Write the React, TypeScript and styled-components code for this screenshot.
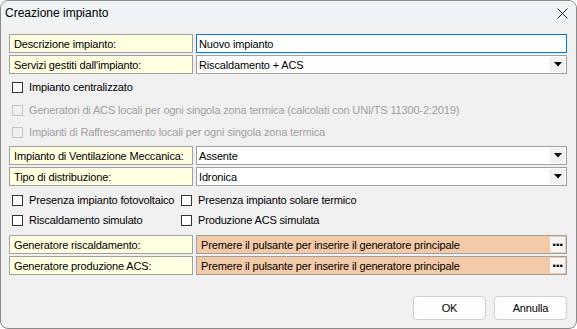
import React from "react";
import styled, { createGlobalStyle } from "styled-components";

const Global = createGlobalStyle`
  html, body { margin: 0; padding: 0; background: #ffffff; }
  body { font-family: "Liberation Sans", Arial, sans-serif; }
  * { box-sizing: border-box; }
`;

const Window = styled.div`
  width: 577px;
  height: 329px;
  border: 1px solid #8a8a8a;
  border-radius: 8px;
  background: #f0f0f0;
  overflow: hidden;
  display: flex;
  flex-direction: column;
`;

const TitleBar = styled.div`
  height: 24px;
  background: #eef3f6;
  display: flex;
  align-items: center;
  justify-content: space-between;
  padding: 0 7px 0 4px;
  font-family: "Liberation Sans", Arial, sans-serif;
  font-size: 12px;
  color: #000;
`;

const CloseButton = styled.div`
  width: 14px;
  height: 14px;
  display: flex;
  align-items: center;
  justify-content: center;
`;

const Content = styled.div`
  display: flex;
  flex-direction: column;
  padding: 9px 8px 0 8px;
  font-size: 11px;
  letter-spacing: -0.15px;
  color: #000;
`;

const FieldRow = styled.div<{ $mt?: number }>`
  display: grid;
  grid-template-columns: 184px 371px;
  column-gap: 3px;
  height: 19px;
  margin-top: ${(p) => p.$mt ?? 0}px;
`;

const Label = styled.div`
  background: #ffffe1;
  border: 1px solid #a0a0a0;
  display: flex;
  align-items: center;
  padding-left: 4px;
  white-space: nowrap;
`;

const TextInput = styled.div`
  background: #fff;
  border: 1px solid #0078d7;
  display: flex;
  align-items: center;
  padding-left: 2px;
`;

const Combo = styled.div`
  background: #fff;
  border: 1px solid #a0a0a0;
  display: flex;
  align-items: center;
  justify-content: space-between;
  padding-left: 2px;
`;

const ComboArrow = styled.div`
  width: 15px;
  height: 15px;
  margin-right: 1px;
  background: #f0f0f0;
  display: flex;
  align-items: center;
  justify-content: center;
`;

const PickerField = styled.div`
  background: #f3caa7;
  border: 1px solid #a0a0a0;
  display: flex;
  align-items: center;
  justify-content: space-between;
  padding-left: 4px;
`;

const EllipsisButton = styled.div`
  width: 15px;
  height: 15px;
  margin-right: 1px;
  background: #f5f5f5;
  display: flex;
  align-items: center;
  justify-content: center;
  font-family: "DejaVu Sans", sans-serif;
  font-weight: bold;
  font-size: 13px;
  letter-spacing: -1.4px;
  line-height: 9px;
  padding-bottom: 6px;
  padding-right: 1px;
`;

const CheckRow = styled.div<{ $mt?: number }>`
  display: flex;
  align-items: center;
  height: 20px;
  margin-top: ${(p) => p.$mt ?? 0}px;
`;

const CheckGrid = styled.div<{ $mt?: number }>`
  display: grid;
  grid-template-columns: 169px 1fr;
  margin-top: ${(p) => p.$mt ?? 0}px;
`;

const CheckItem = styled.label<{ $disabled?: boolean }>`
  display: flex;
  align-items: center;
  gap: 6px;
  height: 20px;
  padding-left: 3px;
  color: ${(p) => (p.$disabled ? "#a0a0a0" : "#000")};
  white-space: nowrap;
`;

const Box = styled.span<{ $disabled?: boolean }>`
  width: 11px;
  height: 11px;
  flex: none;
  border: 1px solid ${(p) => (p.$disabled ? "#c4c4c4" : "#333")};
  background: ${(p) => (p.$disabled ? "#f0f0f0" : "#fff")};
`;

const ButtonBar = styled.div`
  display: flex;
  justify-content: flex-end;
  gap: 8px;
  margin-top: 21px;
  padding-right: 1px;
`;

const Button = styled.div`
  width: 73px;
  height: 24px;
  background: #fdfdfd;
  border: 1px solid #d0d0d0;
  border-radius: 4px;
  display: flex;
  align-items: center;
  justify-content: center;
  font-size: 11px;
`;

const Check = ({ label, disabled }: { label: string; disabled?: boolean }) => (
  <CheckItem $disabled={disabled}>
    <Box $disabled={disabled} />
    {label}
  </CheckItem>
);

const Arrow = () => (
  <svg width="8" height="5" viewBox="0 0 8 5">
    <polygon points="0,0 8,0 4,4.5" fill="#000" />
  </svg>
);

export default function App() {
  return (
    <>
      <Global />
      <Window>
        <TitleBar>
          <span>Creazione impianto</span>
          <CloseButton>
            <svg width="11" height="11" viewBox="0 0 11 11">
              <path d="M0.5 0.5 L10.5 10.5 M10.5 0.5 L0.5 10.5" stroke="#222" strokeWidth="1" />
            </svg>
          </CloseButton>
        </TitleBar>
        <Content>
          <FieldRow>
            <Label>Descrizione impianto:</Label>
            <TextInput>Nuovo impianto</TextInput>
          </FieldRow>
          <FieldRow $mt={2}>
            <Label>Servizi gestiti dall'impianto:</Label>
            <Combo>
              Riscaldamento + ACS
              <ComboArrow>
                <Arrow />
              </ComboArrow>
            </Combo>
          </FieldRow>
          <CheckRow $mt={3}>
            <Check label="Impianto centralizzato" />
          </CheckRow>
          <CheckRow $mt={3}>
            <Check
              disabled
              label="Generatori di ACS locali per ogni singola zona termica (calcolati con UNI/TS 11300-2:2019)"
            />
          </CheckRow>
          <CheckRow $mt={2}>
            <Check
              disabled
              label="Impianti di Raffrescamento locali per ogni singola zona termica"
            />
          </CheckRow>
          <FieldRow $mt={4}>
            <Label>Impianto di Ventilazione Meccanica:</Label>
            <Combo>
              Assente
              <ComboArrow>
                <Arrow />
              </ComboArrow>
            </Combo>
          </FieldRow>
          <FieldRow $mt={2}>
            <Label>Tipo di distribuzione:</Label>
            <Combo>
              Idronica
              <ComboArrow>
                <Arrow />
              </ComboArrow>
            </Combo>
          </FieldRow>
          <CheckGrid $mt={4}>
            <Check label="Presenza impianto fotovoltaico" />
            <Check label="Presenza impianto solare termico" />
            <Check label="Riscaldamento simulato" />
            <Check label="Produzione ACS simulata" />
          </CheckGrid>
          <FieldRow $mt={5}>
            <Label>Generatore riscaldamento:</Label>
            <PickerField>
              Premere il pulsante per inserire il generatore principale
              <EllipsisButton>...</EllipsisButton>
            </PickerField>
          </FieldRow>
          <FieldRow $mt={2}>
            <Label>Generatore produzione ACS:</Label>
            <PickerField>
              Premere il pulsante per inserire il generatore principale
              <EllipsisButton>...</EllipsisButton>
            </PickerField>
          </FieldRow>
          <ButtonBar>
            <Button>OK</Button>
            <Button>Annulla</Button>
          </ButtonBar>
        </Content>
      </Window>
    </>
  );
}
